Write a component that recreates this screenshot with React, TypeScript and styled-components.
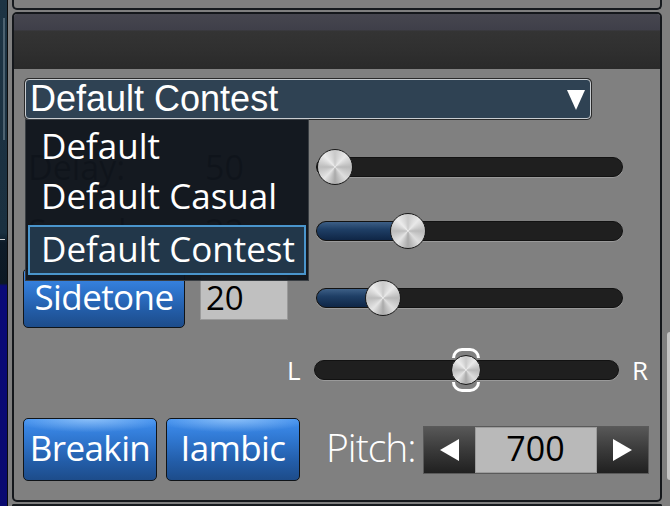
import React, { useState } from 'react';
import styled, { createGlobalStyle } from 'styled-components';

const GlobalStyle = createGlobalStyle`
    html, body {
        margin: 0;
        padding: 0;
        background: #7d7d7d;
        overflow: hidden;
    }
`;

const UI_FONT = `"Open Sans", "Noto Sans", sans-serif`;

const Page = styled.div`
    width: 670px;
    height: 506px;
    display: flex;
    background: #7f7f7f;
    font-family: ${UI_FONT};
    overflow: hidden;
`;

/* neighbouring window peeking in at the left edge */
const LeftStrip = styled.div`
    position: relative;
    width: 7px;
    flex-shrink: 0;
    border-right: 1px solid #0b0b0b;
    background: linear-gradient(180deg, #1d3444 0%, #1a3040 46%, #0d1b28 48%, #0c1824 56%, #0a0a78 56.5%, #0a0a70 100%);
`;

const ScrollThumb = styled.div`
    position: absolute;
    left: 3px;
    top: 18px;
    width: 2px;
    height: 122px;
    background: #4d6270;
`;

const StripMark = styled.div`
    position: absolute;
    left: 0;
    top: 239px;
    width: 5px;
    height: 1px;
    background: #d0d0d0;
`;

/* neighbouring window edge at the right */
const RightStrip = styled.div`
    width: 3px;
    flex-shrink: 0;
    display: flex;
    flex-direction: column;
    padding: 332px 0 26px;
`;

const RightEdge = styled.div`
    flex: 1;
    background: #c4c4c4;
    border-radius: 3px 0 0 3px;
`;

const Column = styled.div`
    flex: 1;
    display: flex;
    flex-direction: column;
    gap: 2px;
    padding: 0 5px 0 4px;
`;

const StubTop = styled.div`
    height: 8px;
    flex-shrink: 0;
    background: #808080;
    border: 2px solid #161a1e;
    border-top: none;
    border-radius: 0 0 5px 5px;
`;

const StubBottom = styled.div`
    flex: 1;
    background: #4a4a4a;
    border: 2px solid #161a1e;
    border-bottom: none;
    border-radius: 5px 5px 0 0;
`;

const Panel = styled.div`
    height: 486px;
    flex-shrink: 0;
    display: flex;
    flex-direction: column;
    background: #808080;
    border: 2px solid #14171b;
    border-radius: 5px;
    overflow: hidden;
`;

const Header = styled.div`
    height: 54px;
    flex-shrink: 0;
    background: linear-gradient(180deg, #46464f 0%, #3f3f49 30%, #343434 31%, #2f2f2f 70%, #2a2a2a 100%);
    border-bottom: 1px solid #2a2a2a;
`;

const Body = styled.div`
    position: relative;
    flex: 1;
    display: flex;
    flex-direction: column;
    padding: 10px 0 0 9px;
`;

const Combo = styled.div`
    width: 556px;
    height: 38px;
    display: flex;
    align-items: center;
    justify-content: space-between;
    padding: 0 4px 0 4px;
    box-sizing: content-box;
    background: #2f4253;
    border: 1px solid #c8ccd0;
    border-radius: 4px;
    box-shadow: 0 0 0 1px #2a2a2a;
    margin-left: 2px;
    color: #fff;
    font-family: "Liberation Sans", Arial, sans-serif;
    font-size: 36px;
    line-height: 38px;
    cursor: pointer;
`;

const ComboArrow = styled.svg`
    width: 20px;
    height: 22px;
    margin-top: 2px;
`;

const Rows = styled.div`
    display: flex;
    flex-direction: column;
    margin-top: 16px;
`;

const Row = styled.div<{ $h: number }>`
    height: ${(p) => p.$h}px;
    display: grid;
    grid-template-columns: 161px 16px 88px 28px 1fr;
    align-items: center;
`;

const PlainLabel = styled.div`
    grid-column: 1;
    padding-left: 5px;
    font-size: 34px;
    color: #141414;
    line-height: 1;
`;

const PlainValue = styled.div`
    grid-column: 3;
    padding-left: 5px;
    font-size: 34px;
    color: #141414;
    line-height: 1;
`;

const BlueButton = styled.button<{ $w: number; $h: number }>`
    width: ${(p) => p.$w}px;
    height: ${(p) => p.$h}px;
    padding: 0 0 4px;
    border: 1px solid #101418;
    border-radius: 5px;
    background:
        radial-gradient(ellipse 60% 22% at 50% 0%, rgba(200, 230, 255, 0.55), rgba(200, 230, 255, 0) 100%),
        linear-gradient(180deg, #3f8ff0 0%, #2f76cf 35%, #235da8 70%, #1d4c8a 100%);
    color: #fff;
    font-family: ${UI_FONT};
    font-size: 35px;
    letter-spacing: -0.6px;
    white-space: nowrap;
    cursor: pointer;
`;

const ValueBox = styled.div`
    grid-column: 3;
    height: 44px;
    display: flex;
    align-items: center;
    padding-left: 5px;
    padding-bottom: 2px;
    box-sizing: border-box;
    background: #c0c0c0;
    border: 1px solid #9a9a9a;
    font-size: 33px;
    color: #000;
`;

const SliderCell = styled.div`
    grid-column: 5;
    display: flex;
    align-items: center;
    padding-right: 37px;
`;

const PanCell = styled.div`
    grid-column: 3 / 6;
    display: flex;
    align-items: center;
    gap: 13px;
    margin-left: 87px;
    padding-right: 12px;
`;

const Track = styled.div`
    position: relative;
    flex: 1;
    height: 18px;
    border-radius: 10px;
    background: #1f1f1f;
    border: 1px solid #121212;
    box-shadow: 0 1px 0 #9a9a9a;
`;

const Fill = styled.div`
    position: absolute;
    left: 0;
    top: 0;
    bottom: 0;
    border-radius: 9px 0 0 9px;
    background: linear-gradient(180deg, #3d5f86 0%, #1f3f66 40%, #0f2646 100%);
`;

const Thumb = styled.div<{ $size: number }>`
    position: absolute;
    top: 50%;
    width: ${(p) => p.$size}px;
    height: ${(p) => p.$size}px;
    margin-left: ${(p) => -p.$size / 2}px;
    margin-top: ${(p) => -p.$size / 2}px;
    box-sizing: border-box;
    border-radius: 50%;
    border: 1.5px solid #1a1a1a;
    background: conic-gradient(from 0deg, #c9c9c9, #e9e9e9 12%, #b9b9b9 25%, #dedede 38%, #a9a9a9 50%, #e5e5e5 62%, #bcbcbc 75%, #ececec 88%, #c9c9c9);
`;

const Bracket = styled.div<{ $side: 'top' | 'bottom' }>`
    position: absolute;
    left: 50%;
    width: 28px;
    height: 10px;
    margin-left: -14px;
    ${(p) => (p.$side === 'top' ? 'top: -8px;' : 'bottom: -8px;')}
    border: 3px solid #fff;
    ${(p) => (p.$side === 'top' ? 'border-bottom: none; border-radius: 12px 12px 0 0;' : 'border-top: none; border-radius: 0 0 12px 12px;')}
    box-sizing: border-box;
`;

const PanLetter = styled.span`
    font-size: 26px;
    color: #fff;
    line-height: 1;
`;

const BottomRow = styled.div`
    display: flex;
    align-items: center;
    gap: 9px;
    margin-top: 11px;
`;

const PitchGroup = styled.div`
    display: flex;
    align-items: center;
    gap: 7px;
    margin-left: 17px;
`;

const PitchLabel = styled.span`
    font-size: 39px;
    font-weight: 300;
    letter-spacing: -1px;
    color: #fff;
    padding-bottom: 7px;
`;

const Spinner = styled.div`
    display: flex;
    height: 48px;
    border: 1px solid #5a5a5a;
    box-sizing: border-box;
`;

const SpinButton = styled.button`
    width: 51px;
    height: 100%;
    padding: 0;
    border: none;
    background: linear-gradient(180deg, #585858 0%, #3a3a3a 50%, #202020 100%);
    display: flex;
    align-items: center;
    justify-content: center;
    cursor: pointer;
`;

const SpinValue = styled.div`
    width: 122px;
    display: flex;
    align-items: center;
    justify-content: center;
    background: #b9b9b9;
    border: 1px solid #9c9c9c;
    font-size: 34px;
    color: #000;
    padding-bottom: 3px;
    box-sizing: border-box;
`;

/* open drop-down list of the profile combo */
const Popup = styled.div`
    position: absolute;
    left: 11px;
    top: 50px;
    width: 278px;
    height: 158px;
    padding: 2px 2px 0 2px;
    background: rgba(16, 21, 28, 0.96);
    border: 1px solid #3a3f44;
    box-sizing: content-box;
`;

const Option = styled.div<{ $active?: boolean }>`
    height: 50px;
    display: flex;
    align-items: center;
    padding-left: ${(p) => (p.$active ? 11 : 13)}px;
    padding-bottom: 3px;
    margin-top: ${(p) => (p.$active ? 3 : 0)}px;
    border: ${(p) => (p.$active ? '2px solid #4a95cc' : '0')};
    background: ${(p) => (p.$active ? '#22374a' : 'transparent')};
    color: #fff;
    font-size: 35px;
    line-height: 1;
    box-sizing: border-box;
    cursor: pointer;
`;

const Arrow: React.FC<{ dir: 'left' | 'right' }> = ({ dir }) => (
    <svg width="21" height="24" viewBox="0 0 21 24">
        {dir === 'left' ? <polygon points="20,1 20,23 1,12" fill="#fff" /> : <polygon points="1,1 1,23 20,12" fill="#fff" />}
    </svg>
);

const Slider: React.FC<{ value: number; size?: number; fill?: boolean; brackets?: boolean }> = ({ value, size = 36, fill = true, brackets }) => {
    const pos = `calc(${size / 2}px + (100% - ${size}px) * ${value})`;
    return (
        <Track>
            {fill && value > 0 && <Fill style={{ width: pos }} />}
            <Thumb $size={size} style={{ left: pos }}>
                {brackets && <Bracket $side="top" />}
                {brackets && <Bracket $side="bottom" />}
            </Thumb>
        </Track>
    );
};

const profiles = ['Default', 'Default Casual', 'Default Contest'];

export default function App() {
    const [profile, setProfile] = useState('Default Contest');
    const [pitch, setPitch] = useState(700);

    return (
        <>
            <GlobalStyle />
            <Page>
                <LeftStrip>
                    <ScrollThumb />
                    <StripMark />
                </LeftStrip>
                <Column>
                    <StubTop />
                    <Panel>
                        <Header />
                        <Body>
                            <Combo>
                                <span>{profile}</span>
                                <ComboArrow viewBox="0 0 20 22">
                                    <polygon points="1,1 19,1 10,21" fill="#fff" />
                                </ComboArrow>
                            </Combo>
                            <Rows>
                                <Row $h={64}>
                                    <PlainLabel>Delay:</PlainLabel>
                                    <PlainValue>50</PlainValue>
                                    <SliderCell>
                                        <Slider value={0} />
                                    </SliderCell>
                                </Row>
                                <Row $h={64}>
                                    <PlainLabel>Speed:</PlainLabel>
                                    <PlainValue>32</PlainValue>
                                    <SliderCell>
                                        <Slider value={0.273} />
                                    </SliderCell>
                                </Row>
                                <Row $h={70}>
                                    <BlueButton $w={162} $h={60}>Sidetone</BlueButton>
                                    <ValueBox>20</ValueBox>
                                    <SliderCell>
                                        <Slider value={0.18} />
                                    </SliderCell>
                                </Row>
                                <Row $h={74}>
                                    <PanCell>
                                        <PanLetter>L</PanLetter>
                                        <Slider value={0.5} size={30} fill={false} brackets />
                                        <PanLetter>R</PanLetter>
                                    </PanCell>
                                </Row>
                            </Rows>
                            <BottomRow>
                                <BlueButton $w={134} $h={63}>Breakin</BlueButton>
                                <BlueButton $w={134} $h={63}>Iambic</BlueButton>
                                <PitchGroup>
                                    <PitchLabel>Pitch:</PitchLabel>
                                    <Spinner>
                                        <SpinButton onClick={() => setPitch(pitch - 10)}>
                                            <Arrow dir="left" />
                                        </SpinButton>
                                        <SpinValue>{pitch}</SpinValue>
                                        <SpinButton onClick={() => setPitch(pitch + 10)}>
                                            <Arrow dir="right" />
                                        </SpinButton>
                                    </Spinner>
                                </PitchGroup>
                            </BottomRow>
                            <Popup>
                                {profiles.map((p) => (
                                    <Option key={p} $active={p === profile} onClick={() => setProfile(p)}>
                                        {p}
                                    </Option>
                                ))}
                            </Popup>
                        </Body>
                    </Panel>
                    <StubBottom />
                </Column>
                <RightStrip>
                    <RightEdge />
                </RightStrip>
            </Page>
        </>
    );
}
